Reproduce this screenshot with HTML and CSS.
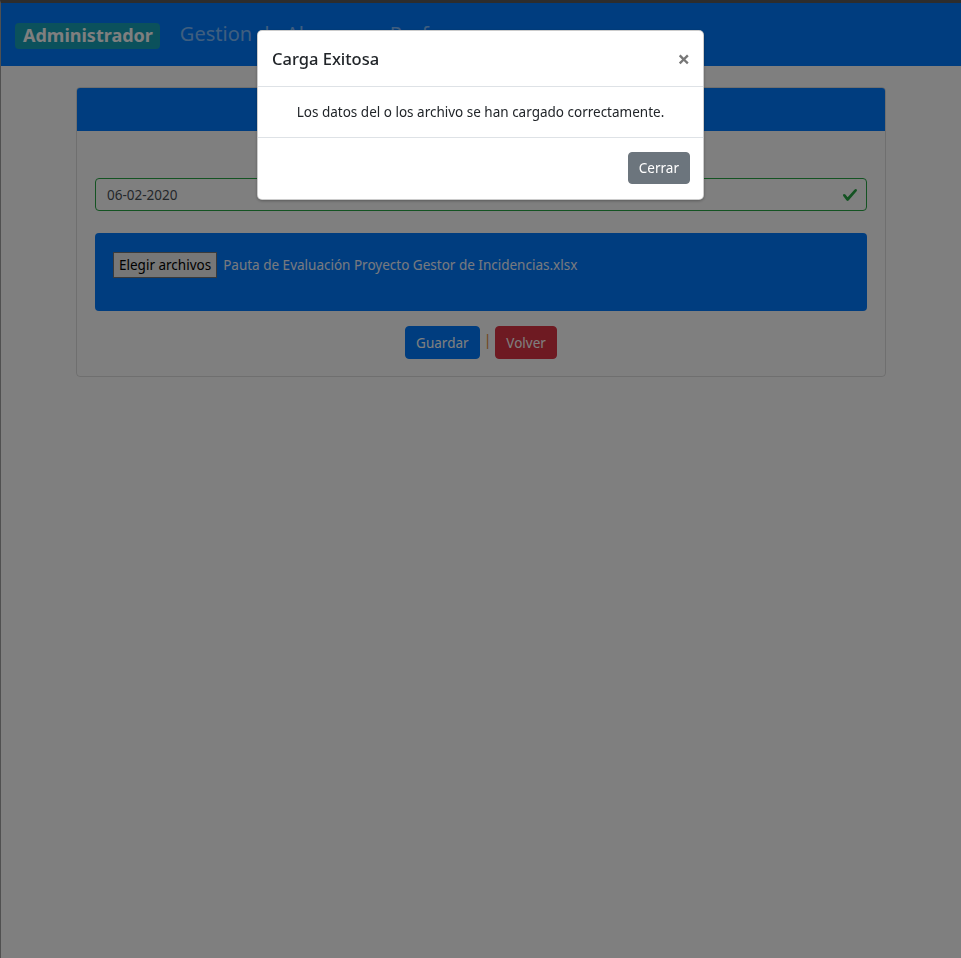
FILE: index.html
```html
<!DOCTYPE html>
<html lang="es">
<head>
<meta charset="utf-8">
<title>Administrador</title>
<link rel="stylesheet" href="styles.css">
</head>
<body>
<nav class="navbar">
  <span class="badge">Administrador</span>
  <span class="brand">Gestion de Alumnos y Profesores</span>
</nav>
<main class="page">
  <section class="card">
    <div class="card-header"></div>
    <div class="card-body">
      <div class="date-input">
        <span>06-02-2020</span>
        <svg class="check" viewBox="0 0 8 8" width="16" height="16"><path fill="#28a745" d="M2.3 6.73L.6 4.53c-.4-1.04.46-1.4 1.1-.8l1.1 1.4 3.4-3.8c.6-.63 1.6-.27 1.2.7l-4 4.6c-.43.5-.8.4-1.1.1z"/></svg>
      </div>
      <div class="upload">
        <span class="file-btn">Elegir archivos</span>
        <span class="file-name">Pauta de Evaluación Proyecto Gestor de Incidencias.xlsx</span>
      </div>
      <div class="actions">
        <button class="btn btn-primary">Guardar</button>
        <span class="sep">|</span>
        <button class="btn btn-danger">Volver</button>
      </div>
    </div>
  </section>
</main>
<div class="backdrop"></div>
<div class="modal">
  <div class="modal-header">
    <h5 class="modal-title">Carga Exitosa</h5>
    <span class="close">×</span>
  </div>
  <div class="modal-body">Los datos del o los archivo se han cargado correctamente.</div>
  <div class="modal-footer">
    <button class="btn btn-secondary">Cerrar</button>
  </div>
</div>
</body>
</html>
```
FILE: styles.css
```css
* { box-sizing: border-box; }
html, body { height: 100%; }
body {
  margin: 0;
  background: #fff;
  border-top: 3px solid #5a5a5a;
  border-left: 1px solid #a0a0a0;
  font-family: "Noto Sans", "Open Sans", sans-serif;
  font-size: 13.5px;
  color: #212529;
}
.navbar {
  height: 63px;
  background: #007bff;
  display: flex;
  align-items: center;
  padding: 0 14px;
  gap: 20px;
}
.badge {
  background: #17a2b8;
  color: #fff;
  font-weight: 700;
  font-size: 18px;
  padding: 1px 7px 3px 8px;
  border-radius: 4px;
  line-height: 22px;
  margin-top: 2px;
}
.brand {
  color: rgba(255,255,255,.5);
  font-size: 20px;
  margin-top: -3px;
}
.page {
  padding: 21px 75px 0 75px;
}
.card {
  border: 1px solid rgba(0,0,0,.125);
  border-radius: 4px;
  overflow: hidden;
}
.card-header {
  height: 43px;
  background: #007bff;
}
.card-body {
  padding: 47px 18px 17px;
}
.date-input {
  height: 33px;
  border: 1px solid #28a745;
  border-radius: 4px;
  display: flex;
  align-items: center;
  justify-content: space-between;
  padding: 0 8px 0 11px;
  color: #495057;
}
.check { display: block; }
.upload {
  margin-top: 22px;
  height: 78px;
  background: #007bff;
  border-radius: 4px;
  display: flex;
  align-items: flex-start;
  padding: 19px 18px 18px;
  gap: 6px;
}
.file-btn {
  background: #efefef;
  border: 1px solid #767676;
  color: #000;
  height: 26px;
  line-height: 24px;
  padding: 0 5px;
}
.file-name {
  color: #f0f4ff;
  line-height: 26px;
}
.actions {
  margin-top: 15px;
  display: flex;
  justify-content: center;
  align-items: center;
  gap: 4px;
}
.btn {
  font-family: inherit;
  font-size: 13.5px;
  border: 1px solid transparent;
  border-radius: 4px;
  height: 33px;
  padding: 0 10px;
  color: #fff;
}
.btn-primary { background: #007bff; border-color: #007bff; }
.btn-danger { background: #dc3545; border-color: #dc3545; }
.btn-secondary { background: #6c757d; border-color: #6c757d; height: 32px; }
.sep { color: #e08a30; font-size: 14px; margin-top: -6px; }
.backdrop {
  position: fixed;
  inset: 0;
  background: rgba(0,0,0,.5);
}
.modal {
  position: fixed;
  top: 30px;
  left: 257px;
  width: 447px;
  background: #fff;
  border: 1px solid rgba(0,0,0,.2);
  border-radius: 5px;
  box-shadow: 0 1px 3px rgba(0,0,0,.3);
}
.modal-header {
  height: 56px;
  border-bottom: 1px solid #dee2e6;
  display: flex;
  align-items: center;
  justify-content: space-between;
  padding: 0 13px 0 14px;
}
.modal-title {
  margin: 0;
  font-size: 16.5px;
  font-weight: 500;
}
.close {
  font-size: 22px;
  color: #777;
  font-weight: 700;
  line-height: 1;
  margin-top: -2px;
}
.modal-body {
  height: 51px;
  text-align: center;
  line-height: 50px;
  border-bottom: 1px solid #dee2e6;
}
.modal-footer {
  display: flex;
  justify-content: flex-end;
  padding: 14px 13px 15px;
}
```
